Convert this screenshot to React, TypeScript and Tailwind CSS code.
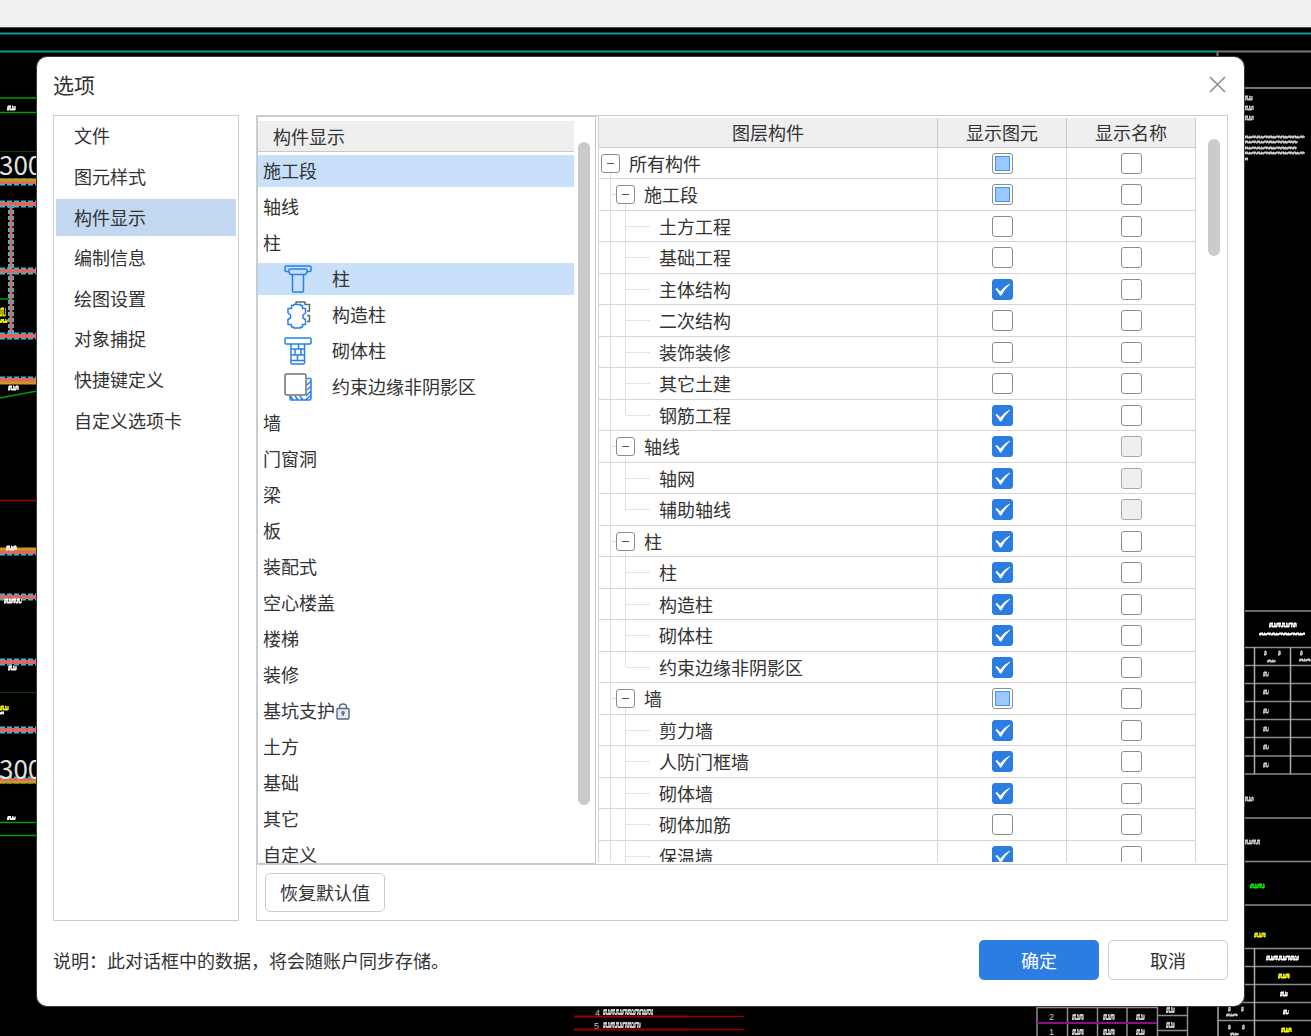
import React from 'react';
import clsx from 'clsx';

type State = 'on' | 'off' | 'mixed' | 'disabled';

interface Row {
  name: string;
  level: 0 | 1 | 2;
  show: State;
  label: State;
  last?: boolean;
}

const navItems = ['文件', '图元样式', '构件显示', '编制信息', '绘图设置', '对象捕捉', '快捷键定义', '自定义选项卡'];

const rows: Row[] = [
  { name: '所有构件', level: 0, show: 'mixed', label: 'off' },
  { name: '施工段', level: 1, show: 'mixed', label: 'off' },
  { name: '土方工程', level: 2, show: 'off', label: 'off' },
  { name: '基础工程', level: 2, show: 'off', label: 'off' },
  { name: '主体结构', level: 2, show: 'on', label: 'off' },
  { name: '二次结构', level: 2, show: 'off', label: 'off' },
  { name: '装饰装修', level: 2, show: 'off', label: 'off' },
  { name: '其它土建', level: 2, show: 'off', label: 'off' },
  { name: '钢筋工程', level: 2, show: 'on', label: 'off', last: true },
  { name: '轴线', level: 1, show: 'on', label: 'disabled' },
  { name: '轴网', level: 2, show: 'on', label: 'disabled' },
  { name: '辅助轴线', level: 2, show: 'on', label: 'disabled', last: true },
  { name: '柱', level: 1, show: 'on', label: 'off' },
  { name: '柱', level: 2, show: 'on', label: 'off' },
  { name: '构造柱', level: 2, show: 'on', label: 'off' },
  { name: '砌体柱', level: 2, show: 'on', label: 'off' },
  { name: '约束边缘非阴影区', level: 2, show: 'on', label: 'off', last: true },
  { name: '墙', level: 1, show: 'mixed', label: 'off' },
  { name: '剪力墙', level: 2, show: 'on', label: 'off' },
  { name: '人防门框墙', level: 2, show: 'on', label: 'off' },
  { name: '砌体墙', level: 2, show: 'on', label: 'off' },
  { name: '砌体加筋', level: 2, show: 'off', label: 'off' },
  { name: '保温墙', level: 2, show: 'on', label: 'off' },
];

const ColumnIcon = () => (
  <svg viewBox="0 0 28 28" className="size-7" fill="none" stroke="#2580e8" strokeWidth="1.5" strokeLinejoin="round">
    <path d="M5 6.5H2.2Q1 6.5 1 5.3V2.2Q1 1 2.2 1H25.8Q27 1 27 2.2V5.3Q27 6.5 25.8 6.5H23" />
    <path d="M6 4H22Q23 4 23 5V7.5L21.5 9.5H6.5L5 7.5V5Q5 4 6 4Z" />
    <path d="M8.5 9.5V26Q8.5 27 9.5 27H18.5Q19.5 27 19.5 26V9.5" />
  </svg>
);

const TieColumnIcon = () => (
  <svg viewBox="0 0 28 28" className="size-7" fill="none" strokeWidth="1.5" strokeLinejoin="round">
    <path stroke="#5c6470" d="M12 3V1H21V3.500H25.500V10H23M23 14.500H25.500V20.500H23" />
    <path stroke="#2580e8" d="M7.500 7.500V4.500H9.500V3.500H16.500V4.500H18.500V7.500H21.500V12L19 14V17L21.500 18.500V23.500H18.500V26H16.500V27H9.500V26H7.500V23.500H4V18.500L6.500 17V14L4 12V7.500Z" />
  </svg>
);

const MasonryColumnIcon = () => (
  <svg viewBox="0 0 28 28" className="size-7" fill="none" stroke="#2580e8" strokeWidth="1.5" strokeLinejoin="round">
    <rect x="1" y="1" width="26" height="6" rx="1" />
    <path d="M7 7V26Q7 27 8 27H19.500Q20.500 27 20.500 26V7M7 12H20.500M7 18H20.500M7 23.500H20.500M14.500 7V12M11 12V18M17 12V18M13.500 18V23.500" />
  </svg>
);

const EdgeZoneIcon = () => (
  <svg viewBox="0 0 28 28" className="size-7" fill="none" strokeWidth="1.5" strokeLinejoin="round">
    <path stroke="#2580e8" d="M23 5.500H26Q27 5.500 27 6.500V25.500Q27 27 25.500 27H7Q6 27 6 26V23M23 12L27 8M23 17L27 13M22 23L27 18M21 27L27 22.500M9 27L6.500 23M14 27L11 23M19 27L16 23" />
    <rect x="1" y="1" width="21" height="21" rx="2" fill="#fff" stroke="#6c727c" />
  </svg>
);

const LockIcon = () => (
  <svg viewBox="0 0 14 17" className="ml-px h-[17px] w-3.5" fill="none" stroke="#5b6880" strokeWidth="1.4">
    <rect x="1" y="5.500" width="12" height="10.500" rx="1" fill="#e6ebf5" />
    <path d="M3.500 5.500V4Q3.500 1 7 1Q10.500 1 10.500 4V5.500M7 10V13" />
    <circle cx="7" cy="9.700" r="1.100" />
  </svg>
);

const components: { name: string; icon?: React.ReactNode; active?: boolean; locked?: boolean }[] = [
  { name: '施工段', active: true },
  { name: '轴线' },
  { name: '柱' },
  { name: '柱', icon: <ColumnIcon />, active: true },
  { name: '构造柱', icon: <TieColumnIcon /> },
  { name: '砌体柱', icon: <MasonryColumnIcon /> },
  { name: '约束边缘非阴影区', icon: <EdgeZoneIcon /> },
  { name: '墙' },
  { name: '门窗洞' },
  { name: '梁' },
  { name: '板' },
  { name: '装配式' },
  { name: '空心楼盖' },
  { name: '楼梯' },
  { name: '装修' },
  { name: '基坑支护', locked: true },
  { name: '土方' },
  { name: '基础' },
  { name: '其它' },
  { name: '自定义' },
];

const CheckBox: React.FC<{ state: State; label: string }> = ({ state, label }) => (
  <span className="relative block size-[21px]">
    <input
      type="checkbox"
      aria-label={label}
      defaultChecked={state === 'on'}
      disabled={state === 'disabled'}
      ref={(el) => {
        if (el) el.indeterminate = state === 'mixed';
      }}
      className="peer block size-[21px] appearance-none rounded-[3px] border border-[#8c8c8c] bg-white checked:border-[#2b7de1] checked:bg-[#2b7de1] disabled:border-[#a8a8a8] disabled:bg-[#efefef]"
    />
    <span className="pointer-events-none absolute inset-[3px] hidden border border-[#3b93fb] bg-[#9ac8ff] peer-indeterminate:block" />
    <svg viewBox="0 0 21 21" className="pointer-events-none absolute inset-0 hidden size-[21px] peer-checked:block" fill="#fff">
      <path d="M3.300 10L5 9L8.300 12.500Q12 7.500 17.800 4.500L18 5.300Q12.500 10.500 9.300 16.500H8Q6 12.500 3.300 10Z" />
    </svg>
  </span>
);

const Expander: React.FC<{ name: string }> = ({ name }) => (
  <span className="relative flex h-full w-[19px] items-center">
    <span className="absolute top-1/2 bottom-0 left-[9px] w-px bg-[#e0e0e0]" />
    <button aria-label={`折叠${name}`} className="relative flex size-[19px] items-center justify-center rounded-[3px] border border-[#8c8c8c] bg-white">
      <span className="h-px w-[7px] bg-[#555]" />
    </button>
  </span>
);

const NameCell: React.FC<{ row: Row }> = ({ row }) => (
  <div className="flex h-full items-center">
    {row.level > 0 && <span className="h-full w-3 shrink-0 border-r border-[#e0e0e0]" />}
    {row.level === 0 && (
      <span className="ml-0.5 h-full">
        <Expander name={row.name} />
      </span>
    )}
    {row.level === 1 && (
      <>
        <span className="h-px w-[5px] bg-[#e0e0e0]" />
        <Expander name={row.name} />
      </>
    )}
    {row.level === 2 && (
      <>
        <span className={clsx('w-[15px] shrink-0 self-start border-r border-[#e0e0e0]', row.last ? 'h-1/2' : 'h-full')} />
        <span className="h-px w-6 shrink-0 bg-[#e3e3e3]" />
      </>
    )}
    <span className="ml-[9px] pb-px whitespace-nowrap">{row.name}</span>
  </div>
);

// Dense CAD annotations, too small to read at this zoom level
const Note: React.FC<{ x: number; y: number; w: number; h?: number; color?: string }> = ({ x, y, w, h = 5, color = '#c8c8c8' }) => {
  const top = y - h / 2;
  return (
    <g stroke={color} fill="none">
      <path d={`M${x} ${y}h${w}`} strokeWidth={h - 1} strokeDasharray="4 1 7 1 3 1" opacity="0.7" />
      <path d={`M${x + 1} ${top + 1}h${w - 2}`} strokeWidth="2" strokeDasharray="3 1 1 2 4 1" />
      <path d={`M${x} ${top + h - 1}h${w - 1}`} strokeWidth="2" strokeDasharray="2 1 5 2 1 1" />
    </g>
  );
};

const Beam: React.FC<{ y: number; gold?: number }> = ({ y, gold }) => (
  <g>
    <path d={`M0 ${y}H37`} stroke="#20c8cc" strokeWidth="7" strokeDasharray="5 2" />
    <path d={`M0 ${y}H37`} stroke="#e06464" strokeWidth="4" />
    {gold && <path d={`M0 ${gold}H37`} stroke="#c89b20" strokeWidth="3" />}
  </g>
);

const Drawing = () => (
  <svg className="absolute inset-0 size-full" aria-hidden="true" fill="none">
    <path d="M0 33.500H1311M0 51.500H1217" stroke="#109a9c" strokeWidth="2" />
    <path d="M1217 51.500H1311M1217.500 51V60M1244 88H1311" stroke="#777" strokeWidth="2" />

    <path d="M0 98H37M0 112.500H37M0 822.500H37M0 835.500H37M0 299H10M0 398L37 391" stroke="#00a000" strokeWidth="1.500" />
    <path d="M0 151.500H37M0 692.500H37" stroke="#084008" />
    <path d="M0 500.500H37" stroke="#a00000" strokeWidth="1.500" />
    <Beam y={182} gold={180} />
    <Beam y={204} />
    <path d="M11 204V336" stroke="#20c8cc" strokeWidth="6" strokeDasharray="4 2" />
    <path d="M11 204V336" stroke="#e06464" strokeWidth="3" />
    <Beam y={271} />
    <Beam y={336} />
    <Beam y={380} gold={383} />
    <Beam y={552} gold={549} />
    <Beam y={597} />
    <Beam y={662} />
    <Beam y={730} />
    <Beam y={780} gold={782} />
    <text x="-1" y="175" fontSize="26" fill="#e0e0e0" className="font-['Noto_Sans_CJK_SC',sans-serif]">300</text>
    <text x="-1" y="779" fontSize="26" fill="#e0e0e0" className="font-['Noto_Sans_CJK_SC',sans-serif]">300</text>
    <Note x={7} y={108} w={9} color="#fff" />
    <Note x={0} y={312} w={6} h={9} color="#ee0" />
    <Note x={0} y={321} w={8} h={4} color="#ee0" />
    <Note x={8} y={388} w={11} color="#fff" />
    <Note x={6} y={548} w={11} color="#fff" />
    <Note x={4} y={601} w={18} color="#fff" />
    <Note x={8} y={668} w={9} color="#fff" />
    <Note x={0} y={708} w={9} color="#ee0" />
    <Note x={0} y={713} w={5} h={3} color="#fff" />
    <Note x={7} y={818} w={9} h={4} color="#fff" />

    <Note x={1244} y={98} w={9} />
    <Note x={1244} y={108} w={10} />
    <Note x={1244} y={118} w={10} />
    <Note x={1244} y={137} w={61} h={3} />
    <Note x={1244} y={142} w={54} h={3} />
    <Note x={1244} y={148} w={53} h={3} />
    <Note x={1244} y={153} w={61} h={3} />
    <Note x={1244} y={159} w={5} h={3} />

    <path d="M1244 611H1311M1244 647.500H1311M1244 665.500H1311M1244 683.500H1311M1244 701.500H1311M1244 719.500H1311M1244 737.500H1311M1244 756H1311M1244 774H1311M1244 818H1311M1244 861.500H1311M1244 905H1311M1244 948.500H1311M1244 966.500H1311M1244 984.500H1311M1218 1002.500H1311M1218 1020.500H1311" stroke="#8c8c8c" strokeWidth="1.500" />
    <path d="M1254.500 647V774M1290.500 647V774M1254.500 948V1036M1218 1002V1036" stroke="#aaa" strokeWidth="1.500" />
    <Note x={1269} y={625} w={28} color="#fff" />
    <Note x={1259} y={634} w={47} h={3} color="#fff" />
    <Note x={1264} y={653} w={3} />
    <Note x={1278} y={653} w={3} />
    <Note x={1300} y={653} w={3} />
    <Note x={1267} y={661} w={9} h={3} />
    <Note x={1299} y={660} w={12} h={3} />
    {[674, 692, 711, 729, 747, 765].map((y) => (
      <Note key={y} x={1263} y={y} w={6} />
    ))}
    <Note x={1244} y={799} w={10} />
    <Note x={1244} y={842} w={17} />
    <Note x={1250} y={886} w={15} color="#0e0" />
    <Note x={1254} y={935} w={12} color="#ee0" />
    <Note x={1266} y={958} w={34} color="#fff" />
    <Note x={1278} y={976} w={12} color="#ff0" />
    <Note x={1280} y={994} w={8} color="#fff" />
    <Note x={1283} y={1012} w={6} color="#fff" />
    <Note x={1281} y={1030} w={11} color="#ff0" />
    <Note x={1226} y={1015} w={12} h={3} />
    <Note x={1228} y={1009} w={3} />
    <Note x={1241} y={1009} w={3} />
    <Note x={1228} y={1027} w={3} />
    <Note x={1242} y={1027} w={3} />
    <Note x={1230} y={1034} w={9} h={3} />

    <text x="595" y="1016" fontSize="9" fill="#ccc" className="font-['Liberation_Sans',sans-serif]">4</text>
    <text x="594" y="1029" fontSize="9" fill="#ccc" className="font-['Liberation_Sans',sans-serif]">5</text>
    <Note x={603} y={1012} w={51} h={6} />
    <Note x={603} y={1025} w={38} h={6} />
    <path d="M574 1016.500H688M574 1029.500H688" stroke="#900" strokeWidth="2" />
    <path d="M688 1016.500H744M688 1029.500H744" stroke="#900" strokeWidth="1.500" />
    <path d="M1037 1007.500H1157M1037 1006V1036M1067.500 1006V1036M1097.500 1006V1036M1127 1006V1036M1157.500 1006V1036M1187.500 1006V1036M1157 1015.500H1188M1157 1030.500H1188" stroke="#8c8c8c" strokeWidth="1.500" />
    <path d="M1037 1023H1157" stroke="#8a108a" strokeWidth="2" />
    {['2', '1'].map((n, i) => (
      <g key={n}>
        <text x="1049" y={1020 + i * 15} fontSize="9" fill="#ccc" className="font-['Liberation_Sans',sans-serif]">{n}</text>
        <Note x={1072} y={1017 + i * 15} w={12} h={6} />
        <Note x={1103} y={1017 + i * 15} w={12} h={6} />
        <Note x={1136} y={1017 + i * 15} w={9} h={6} />
      </g>
    ))}
    <Note x={1166} y={1010} w={9} h={6} />
    <Note x={1166} y={1025} w={9} h={6} />
  </svg>
);

const App: React.FC = () => {
  return (
    <div className="relative flex h-screen flex-col overflow-hidden bg-black font-['Noto_Sans_CJK_SC',sans-serif] text-lg leading-6 text-[#333]">
      <Drawing />
      <header className="relative h-7 shrink-0 border-b border-[#555] bg-[#f0f0f0]" />

      <main
        role="dialog"
        aria-labelledby="dialog-title"
        className="relative mt-[29px] mr-[67px] mb-[30px] ml-[37px] flex min-h-0 flex-1 flex-col rounded-[10px] bg-white px-4 ring-1 ring-[#383838]"
      >
        <div className="flex h-[58px] shrink-0 items-center justify-between pb-1">
          <h1 id="dialog-title" className="text-[21px] leading-7">选项</h1>
          <button aria-label="关闭" className="mr-[2px]">
            <svg viewBox="0 0 17 17" className="size-[17px]" stroke="#8a8a8a" strokeWidth="1.500">
              <path d="M1 1L16 16M16 1L1 16" />
            </svg>
          </button>
        </div>

        <div className="flex min-h-0 flex-1 gap-[17px]">
          <nav className="w-[186px] shrink-0 border border-[#cdd0d3] px-0.5">
            <ul className="grid h-[325px] grid-rows-8 items-center">
              {navItems.map((item) => (
                <li key={item}>
                  <button className={clsx('flex h-[37px] w-full items-center pb-0.5 pl-[18px]', item === '构件显示' && 'bg-[#c1d8f0]')}>{item}</button>
                </li>
              ))}
            </ul>
          </nav>

          <section className="flex min-w-0 flex-1 flex-col border border-[#cbd0d5]">
            <div className="flex min-h-0 flex-1 border-b border-[#cbd0d5]">
              <div className="flex w-[339px] shrink-0 overflow-hidden border border-[#c6cacd]">
                <div className="min-w-0 flex-1 pt-1">
                  <h2 className="flex h-[31px] items-center border-b border-[#c8c8c8] bg-[#eee] pl-[15px]">构件显示</h2>
                  <ul className="mt-px">
                    {components.map((item, i) => (
                      <li key={i} className="flex h-9 items-center">
                        <button className={clsx('flex h-8 w-full items-center pl-[5px]', item.active && 'bg-[#c9e0fa]')}>
                          {item.icon && <span className="mr-5 ml-[21px]">{item.icon}</span>}
                          <span className="pb-0.5">{item.name}</span>
                          {item.locked && <LockIcon />}
                        </button>
                      </li>
                    ))}
                  </ul>
                </div>
                <div className="mt-[25px] mr-[5px] ml-1 h-[663px] w-3 rounded-full bg-[#cbcbcb]" />
              </div>

              <div className="mb-0.5 ml-0.5 flex min-w-0 flex-1 overflow-hidden border-l border-[#d4d4d4] pt-0.5">
                <div className="min-w-0 flex-1 overflow-hidden">
                  <table className="w-full table-fixed border-separate border-spacing-0">
                    <colgroup>
                      <col />
                      <col className="w-[129px]" />
                      <col className="w-[129px]" />
                    </colgroup>
                    <thead>
                      <tr className="h-[30px]">
                        {['图层构件', '显示图元', '显示名称'].map((title) => (
                          <th key={title} className="border-r border-b border-[#c8c8c8] bg-[#efefef] p-0 pb-0.5 font-normal">
                            {title}
                          </th>
                        ))}
                      </tr>
                    </thead>
                    <tbody>
                      {rows.map((row, i) => (
                        <tr key={i}>
                          <td className="border-r border-b border-[#d6d6d6] p-0">
                            <div className={i % 2 ? 'h-[31px]' : 'h-[30px]'}>
                              <NameCell row={row} />
                            </div>
                          </td>
                          <td className="border-r border-b border-[#d6d6d6] p-0">
                            <div className="flex justify-center pl-px">
                              <CheckBox state={row.show} label={`${row.name} 显示图元`} />
                            </div>
                          </td>
                          <td className="border-r border-b border-[#d6d6d6] p-0">
                            <div className="flex justify-center pl-px">
                              <CheckBox state={row.label} label={`${row.name} 显示名称`} />
                            </div>
                          </td>
                        </tr>
                      ))}
                    </tbody>
                  </table>
                </div>
                <div className="mt-[21px] mr-[7px] ml-3 h-[117px] w-3 shrink-0 rounded-full bg-[#cbcbcb]" />
              </div>
            </div>

            <div className="p-2">
              <button className="flex h-[39px] w-[120px] items-center justify-center rounded-[5px] border border-[#ccc] bg-white pb-0.5">恢复默认值</button>
            </div>
          </section>
        </div>

        <footer className="flex h-[85px] shrink-0 items-start justify-between pt-[19px]">
          <p className="flex h-10 items-center">说明：此对话框中的数据，将会随账户同步存储。</p>
          <div className="flex gap-[9px]">
            <button className="h-10 w-[120px] rounded-[5px] bg-[#2b7de1] text-white">确定</button>
            <button className="h-10 w-[120px] rounded-[5px] border border-[#ccc] bg-white">取消</button>
          </div>
        </footer>
      </main>
    </div>
  );
};

export default App;
